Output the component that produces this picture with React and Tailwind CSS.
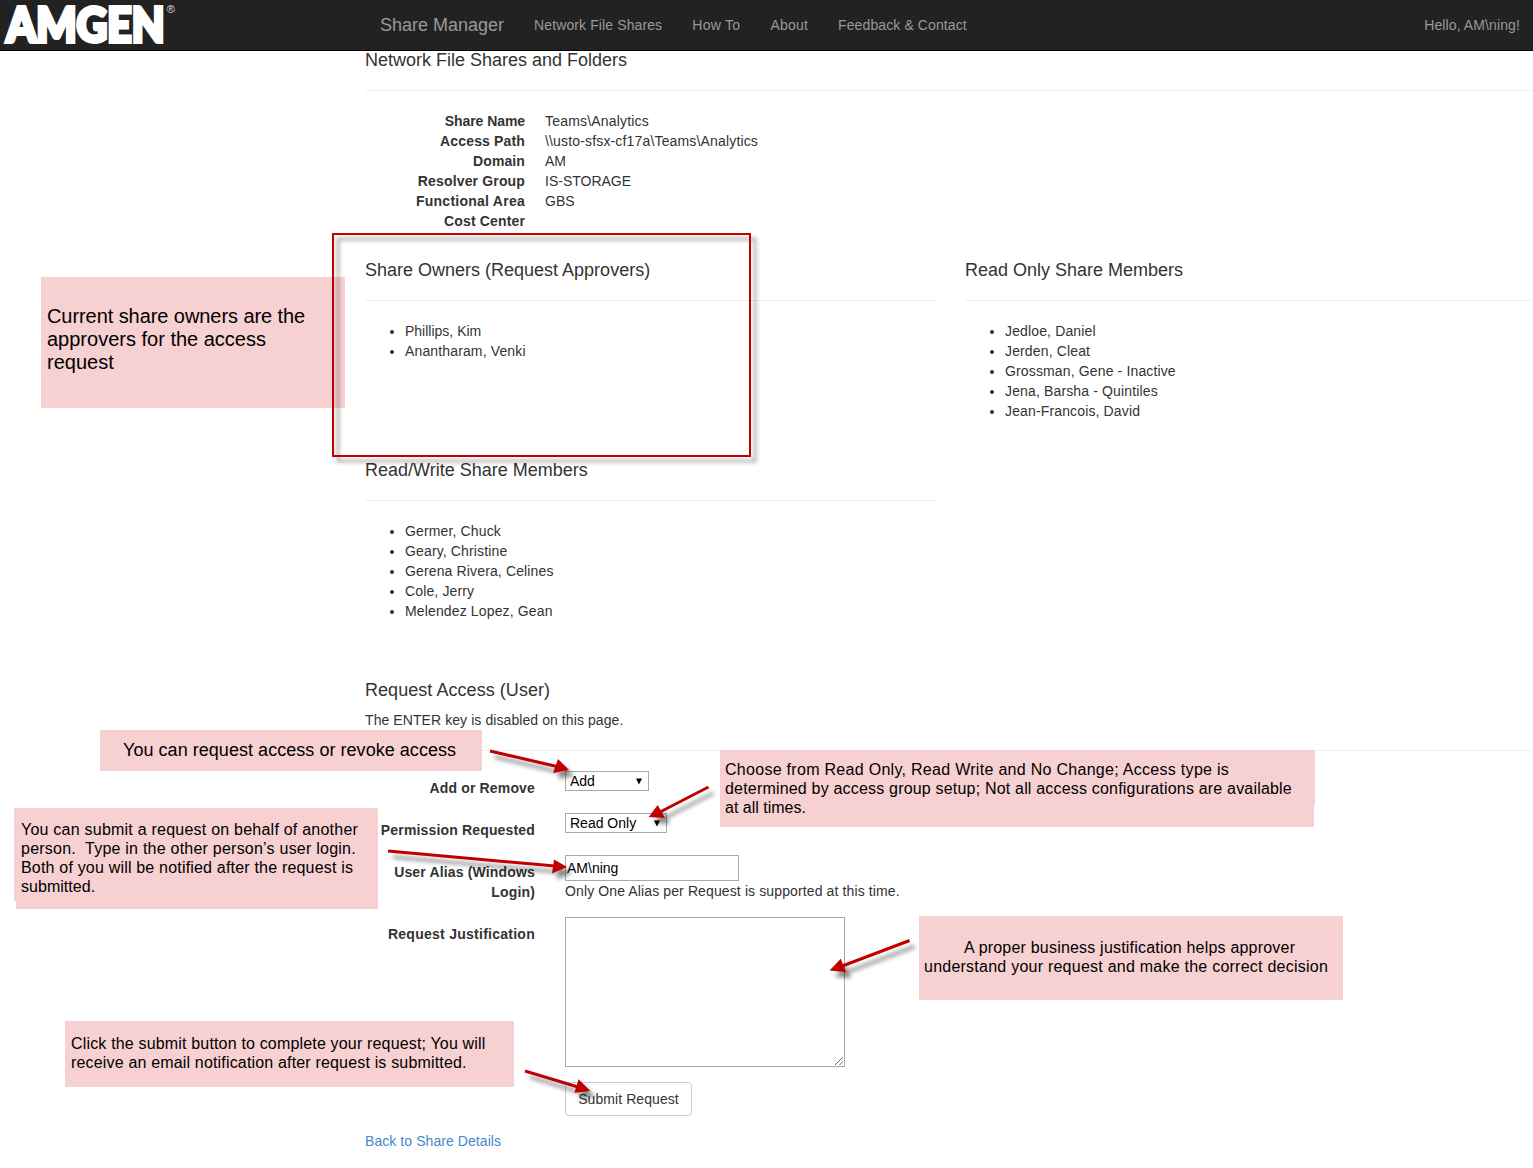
import React from "react";

const details = [
  ["Share Name", "Teams\\Analytics", "tracking-[-0.07px]", "tracking-[0.19px]"],
  ["Access Path", "\\\\usto-sfsx-cf17a\\Teams\\Analytics", "tracking-[0.15px]", "tracking-[0.16px]"],
  ["Domain", "AM", "tracking-[0.1px]", "tracking-normal"],
  ["Resolver Group", "IS-STORAGE", "tracking-[0.15px]", "tracking-normal"],
  ["Functional Area", "GBS", "tracking-[0.25px]", "tracking-normal"],
  ["Cost Center", "", "tracking-[0.15px]", "tracking-normal"],
];

function Logo() {
  return (
    <svg className="block h-[50px] w-[180px] shrink-0 overflow-visible" viewBox="0 0 180 50">
      <text x="6.5" y="42" fill="#fff" stroke="#fff" strokeWidth="4" fontFamily="Lato, sans-serif" fontWeight="900" fontSize="47" textLength="158" lengthAdjust="spacingAndGlyphs">AMGEN</text>
      <text x="166.5" y="13" fill="#ddd" fontFamily="Liberation Sans, sans-serif" fontSize="11.5">®</text>
    </svg>
  );
}

function Section({ title, items, className = "" }) {
  return (
    <section className={className}>
      <h4 className="text-lg leading-5 tracking-normal">{title}</h4>
      <hr className="my-5 border-[#eee]" />
      <ul className="list-disc pl-10">
        {items.map((n) => <li key={n} className={n === "Phillips, Kim" ? "tracking-normal" : "tracking-[0.14px]"}>{n}</li>)}
      </ul>
    </section>
  );
}

function Row({ label, className = "", labelClass = "tracking-[0.16px]", children }) {
  return (
    <div className={`flex ${className}`}>
      <div className={`w-[170px] shrink-0 pt-[7px] text-right font-bold whitespace-pre ${labelClass}`}>{label}</div>
      <div className="ml-[30px]">{children}</div>
    </div>
  );
}

function Select({ value, className }) {
  return (
    <div className={`flex h-5 items-center justify-between border border-[#a9a9a9] pr-[5px] pl-1 text-black ${className}`}>
      <span>{value}</span>
      <svg width="8" height="7" viewBox="0 0 8 7"><path d="M1 0.5h6L4 6.5z" /></svg>
    </div>
  );
}

function Note({ className = "", children }) {
  return <div className={`absolute bg-[#f7d0d2] whitespace-pre text-black ${className}`}>{children}</div>;
}

const arrows = [
  ["490,751 557,766.5", "569,770 558,759 553,773"],
  ["708.5,787 660,812", "648.7,817 657.7,805 665,818"],
  ["388,851 555,866", "567,867 554,859.5 552,873.5"],
  ["909.6,940.5 841,966.5", "829.6,970.5 840.7,958.7 846.2,972.3"],
  ["525,1071 578,1087", "590.4,1091 578.6,1079.3 574.4,1092.7"],
];

export default function App() {
  return (
    <div className="relative h-[1168px] w-full overflow-hidden bg-white font-['Liberation_Sans',Arial,sans-serif] text-sm leading-5 text-[#333]">
      <nav className="flex h-[51px] items-center border-b border-[#080808] bg-[#222] text-[#999]">
        <Logo />
        <div className="ml-[200px] flex grow items-center gap-[30px] tracking-[0.11px]">
          <span className="text-lg tracking-normal">Share Manager</span>
          <span>Network File Shares</span>
          <span className="tracking-[0.3px]">How To</span>
          <span className="tracking-[0.2px]">About</span>
          <span>Feedback &amp; Contact</span>
          <span className="mr-[13px] ml-auto">Hello, AM\ning!</span>
        </div>
      </nav>
      <main className="-mt-px ml-[365px]">
        <h4 className="text-lg leading-5">Network File Shares and Folders</h4>
        <hr className="my-5 border-[#eee]" />
        <dl className="h-[149px]">
          {details.map(([k, v, kt, vt]) => (
            <div key={k} className="flex h-5 gap-5">
              <dt className={`w-40 text-right font-bold ${kt}`}>{k}</dt>
              <dd className={vt}>{v}</dd>
            </div>
          ))}
        </dl>
        <div className="flex gap-[30px]">
          <Section className="h-[200px] w-[570px] shrink-0" title="Share Owners (Request Approvers)" items={["Phillips, Kim", "Anantharam, Venki"]} />
          <Section className="grow" title="Read Only Share Members" items={["Jedloe, Daniel", "Jerden, Cleat", "Grossman, Gene - Inactive", "Jena, Barsha - Quintiles", "Jean-Francois, David"]} />
        </div>
        <Section className="h-[220px] w-[570px]" title="Read/Write Share Members" items={["Germer, Chuck", "Geary, Christine", "Gerena Rivera, Celines", "Cole, Jerry", "Melendez Lopez, Gean"]} />
        <h4 className="text-lg leading-5 tracking-[0.05px]">Request Access (User)</h4>
        <p className="mt-[10px] tracking-[0.08px]">The ENTER key is disabled on this page.</p>
        <hr className="my-5 border-[#eee]" />
        <Row className="h-[42px]" label="Add or Remove">
          <Select value="Add" className="w-[84px]" />
        </Row>
        <Row className="h-[42px]" label="Permission Requested">
          <Select value="Read Only" className="w-[102px]" />
        </Row>
        <Row className="h-[62px]" label={"User Alias (Windows\nLogin)"}>
          <div className="flex h-[26px] w-[174px] items-center border border-[#a9a9a9] pl-px text-black">AM\ning</div>
          <p className="tracking-[0.12px]">Only One Alias per Request is supported at this time.</p>
        </Row>
        <Row className="h-[165px]" label="Request Justification" labelClass="tracking-[0.26px]">
          <div className="flex h-[150px] w-[280px] items-end justify-end border border-[#a9a9a9] p-px">
            <svg width="8" height="8" viewBox="0 0 8 8" stroke="#555" strokeWidth="0.9"><path d="M0 8L8 0M4.5 8L8 4.5" /></svg>
          </div>
        </Row>
        <button className="ml-[200px] block h-[34px] w-[127px] rounded border border-[#ccc] tracking-[0.07px]">Submit Request</button>
        <a className="mt-[15px] block tracking-[0.07px] text-[#428bca]">Back to Share Details</a>
      </main>

      <Note className="top-[277px] left-[41px] h-[131px] w-[304px] pt-[28px] pl-[6px] text-xl leading-[23px]">
        <p className="tracking-[-0.07px]">Current share owners are the</p>
        <p>approvers for the access</p>
        <p>request</p>
      </Note>
      <Note className="top-[730px] left-[100px] h-[41px] w-[382px] pt-[10px] pl-[23px] text-lg leading-5 tracking-[0.04px]">You can request access or revoke access</Note>
      <Note className="top-[809px] left-[16px] h-[100px] w-[362px]" />
      <Note className="top-[808px] left-[14px] h-[93px] w-[363px] pt-[12px] pl-[7px] text-base leading-[19px] tracking-[0.23px]">
        <p>You can submit a request on behalf of another</p>
        <p>{"person.  Type in the other person’s user login."}</p>
        <p className="tracking-[0.19px]">Both of you will be notified after the request is</p>
        <p className="tracking-[0.03px]">submitted.</p>
      </Note>
      <Note className="top-[750px] left-[720px] h-[77px] w-[594px]" />
      <Note className="top-[750px] left-[720px] h-[56px] w-[595px] pt-[10px] pl-[5px] text-base leading-[19px]">
        <p className="tracking-[0.29px]">Choose from Read Only, Read Write and No Change; Access type is</p>
        <p className="tracking-[0.19px]">determined by access group setup; Not all access configurations are available</p>
        <p>at all times.</p>
      </Note>
      <Note className="top-[916px] left-[919px] h-[84px] w-[424px] pt-[22px] text-base leading-[19px]">
        <p className="pl-[45px] tracking-[0.2px]">A proper business justification helps approver</p>
        <p className="pl-[5px] tracking-[0.24px]">understand your request and make the correct decision</p>
      </Note>
      <Note className="top-[1021px] left-[65px] h-[66px] w-[449px] pt-[13px] pl-[6px] text-base leading-[19px] tracking-[0.17px]">
        <p>Click the submit button to complete your request; You will</p>
        <p>receive an email notification after request is submitted.</p>
      </Note>

      <div className="absolute top-[233px] left-[332px] h-[224px] w-[419px] border-2 border-[#c00000] drop-shadow-[5px_5px_2px_rgba(0,0,0,0.45)]" />
      <svg className="pointer-events-none absolute inset-0 h-full w-full drop-shadow-[5px_6px_2px_rgba(0,0,0,0.45)]" viewBox="0 0 1533 1168">
        {arrows.map(([line, head]) => (
          <g key={line}>
            <polyline points={line} fill="none" stroke="#c00000" strokeWidth="3" />
            <polygon points={head} fill="#c00000" />
          </g>
        ))}
      </svg>
    </div>
  );
}
